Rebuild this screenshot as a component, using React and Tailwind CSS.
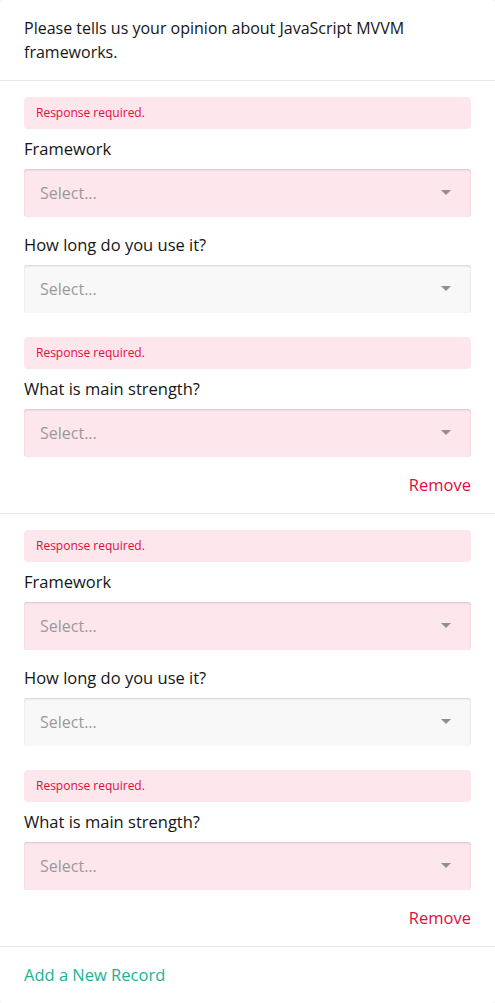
const Arrow = () => (
  <svg width="10" height="6" viewBox="0 0 10 6" className="shrink-0">
    <polygon points="0,0 10,0 5,5" fill="#909090" />
  </svg>
);

const ErrorBox = () => (
  <div className="h-8 rounded-[4px] bg-[#fde6ec] px-3 flex items-center text-[12px] text-[#e60a3e]">
    Response required.
  </div>
);

const Select = ({ error }) => (
  <div
    className={`h-12 rounded-[3px] flex items-center justify-between pl-4 pr-5 shadow-[inset_0_1px_2px_rgba(0,0,0,0.15)] ${
      error ? "bg-[#fde6ec]" : "bg-[#f8f8f8]"
    }`}
  >
    <span className="text-[16px] text-[#9a9a9a]">Select...</span>
    <Arrow />
  </div>
);

const Question = ({ title, error, className = "" }) => (
  <div className={className}>
    {error && (
      <div className="mb-2">
        <ErrorBox />
      </div>
    )}
    <div className="leading-6 text-[16.5px] text-[#161616] mb-2">{title}</div>
    <Select error={error} />
  </div>
);

const Record = () => (
  <div className="px-6 pt-4 pb-4 border-b border-[#e8e8e8]">
    <Question title="Framework" error />
    <Question title="How long do you use it?" className="mt-4" />
    <Question title="What is main strength?" error className="mt-6" />
    <div className="mt-4 flex justify-end leading-6 text-[16.5px] text-[#e60a3e]">Remove</div>
  </div>
);

export default function App() {
  return (
    <div className="min-h-[1003px] bg-[#f3f3f3]" style={{ fontFamily: "'Open Sans', sans-serif" }}>
      <div className="bg-white rounded-[4px] min-h-[1003px]">
        <div className="px-6 py-4 border-b border-[#e8e8e8] text-[16px] leading-6 text-[#161616]">
          Please tells us your opinion about JavaScript MVVM frameworks.
        </div>
        <Record />
        <Record />
        <div className="px-6 py-4 leading-6 text-[16.5px] text-[#19b394]">Add a New Record</div>
      </div>
    </div>
  );
}
